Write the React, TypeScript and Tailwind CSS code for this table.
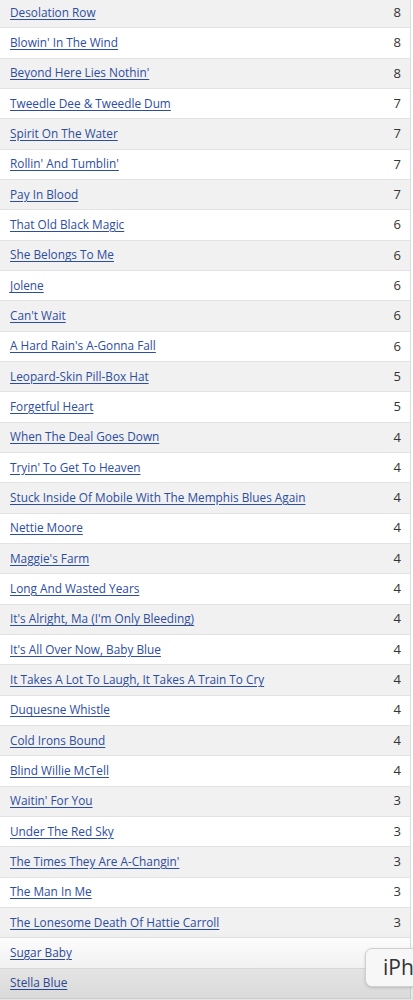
import React from 'react';

const songs: [string, number][] = [
  ['Desolation Row', 8],
  ["Blowin' In The Wind", 8],
  ["Beyond Here Lies Nothin'", 8],
  ['Tweedle Dee & Tweedle Dum', 7],
  ['Spirit On The Water', 7],
  ["Rollin' And Tumblin'", 7],
  ['Pay In Blood', 7],
  ['That Old Black Magic', 6],
  ['She Belongs To Me', 6],
  ['Jolene', 6],
  ["Can't Wait", 6],
  ["A Hard Rain's A-Gonna Fall", 6],
  ['Leopard-Skin Pill-Box Hat', 5],
  ['Forgetful Heart', 5],
  ['When The Deal Goes Down', 4],
  ["Tryin' To Get To Heaven", 4],
  ['Stuck Inside Of Mobile With The Memphis Blues Again', 4],
  ['Nettie Moore', 4],
  ["Maggie's Farm", 4],
  ['Long And Wasted Years', 4],
  ["It's Alright, Ma (I'm Only Bleeding)", 4],
  ["It's All Over Now, Baby Blue", 4],
  ['It Takes A Lot To Laugh, It Takes A Train To Cry', 4],
  ['Duquesne Whistle', 4],
  ['Cold Irons Bound', 4],
  ['Blind Willie McTell', 4],
  ["Waitin' For You", 3],
  ['Under The Red Sky', 3],
  ["The Times They Are A-Changin'", 3],
  ['The Man In Me', 3],
  ['The Lonesome Death Of Hattie Carroll', 3],
  ['Sugar Baby', 3],
  ['Stella Blue', 3],
];

export default function App() {
  return (
    <div className="relative h-[1000px] overflow-hidden bg-white font-['Open_Sans',sans-serif] text-[11.8px]">
      {/* song table */}
      <div className="-mt-[2px] w-[411px] border-r border-[#dcdcdc]">
        {songs.map(([title, count], i) => (
          <div
            key={title}
            className={`flex h-[30.34px] items-center justify-between border-b border-[#e2e2e2] pl-[10px] pr-[9px] ${
              i % 2 === 0 ? 'bg-[#f1f1f1]' : 'bg-white'
            }`}
          >
            <a href="#" className="text-[#2d4da0] underline underline-offset-2">
              {title}
            </a>
            <span className="text-[13px] text-[#333]">{count}</span>
          </div>
        ))}
      </div>

      {/* bottom fade */}
      <div className="pointer-events-none absolute bottom-0 left-0 right-0 h-[70px] bg-gradient-to-b from-transparent to-black/10" />

      {/* text popup */}
      <div className="absolute left-[365px] top-[948px] flex h-[39px] w-[70px] items-center rounded-[7px] border border-[#cfcfcf] bg-[#f7f7f7] pl-[17px] text-[21px] text-[#333] shadow-[0_1px_3px_rgba(0,0,0,0.15)]">
        iPhone
      </div>
    </div>
  );
}
